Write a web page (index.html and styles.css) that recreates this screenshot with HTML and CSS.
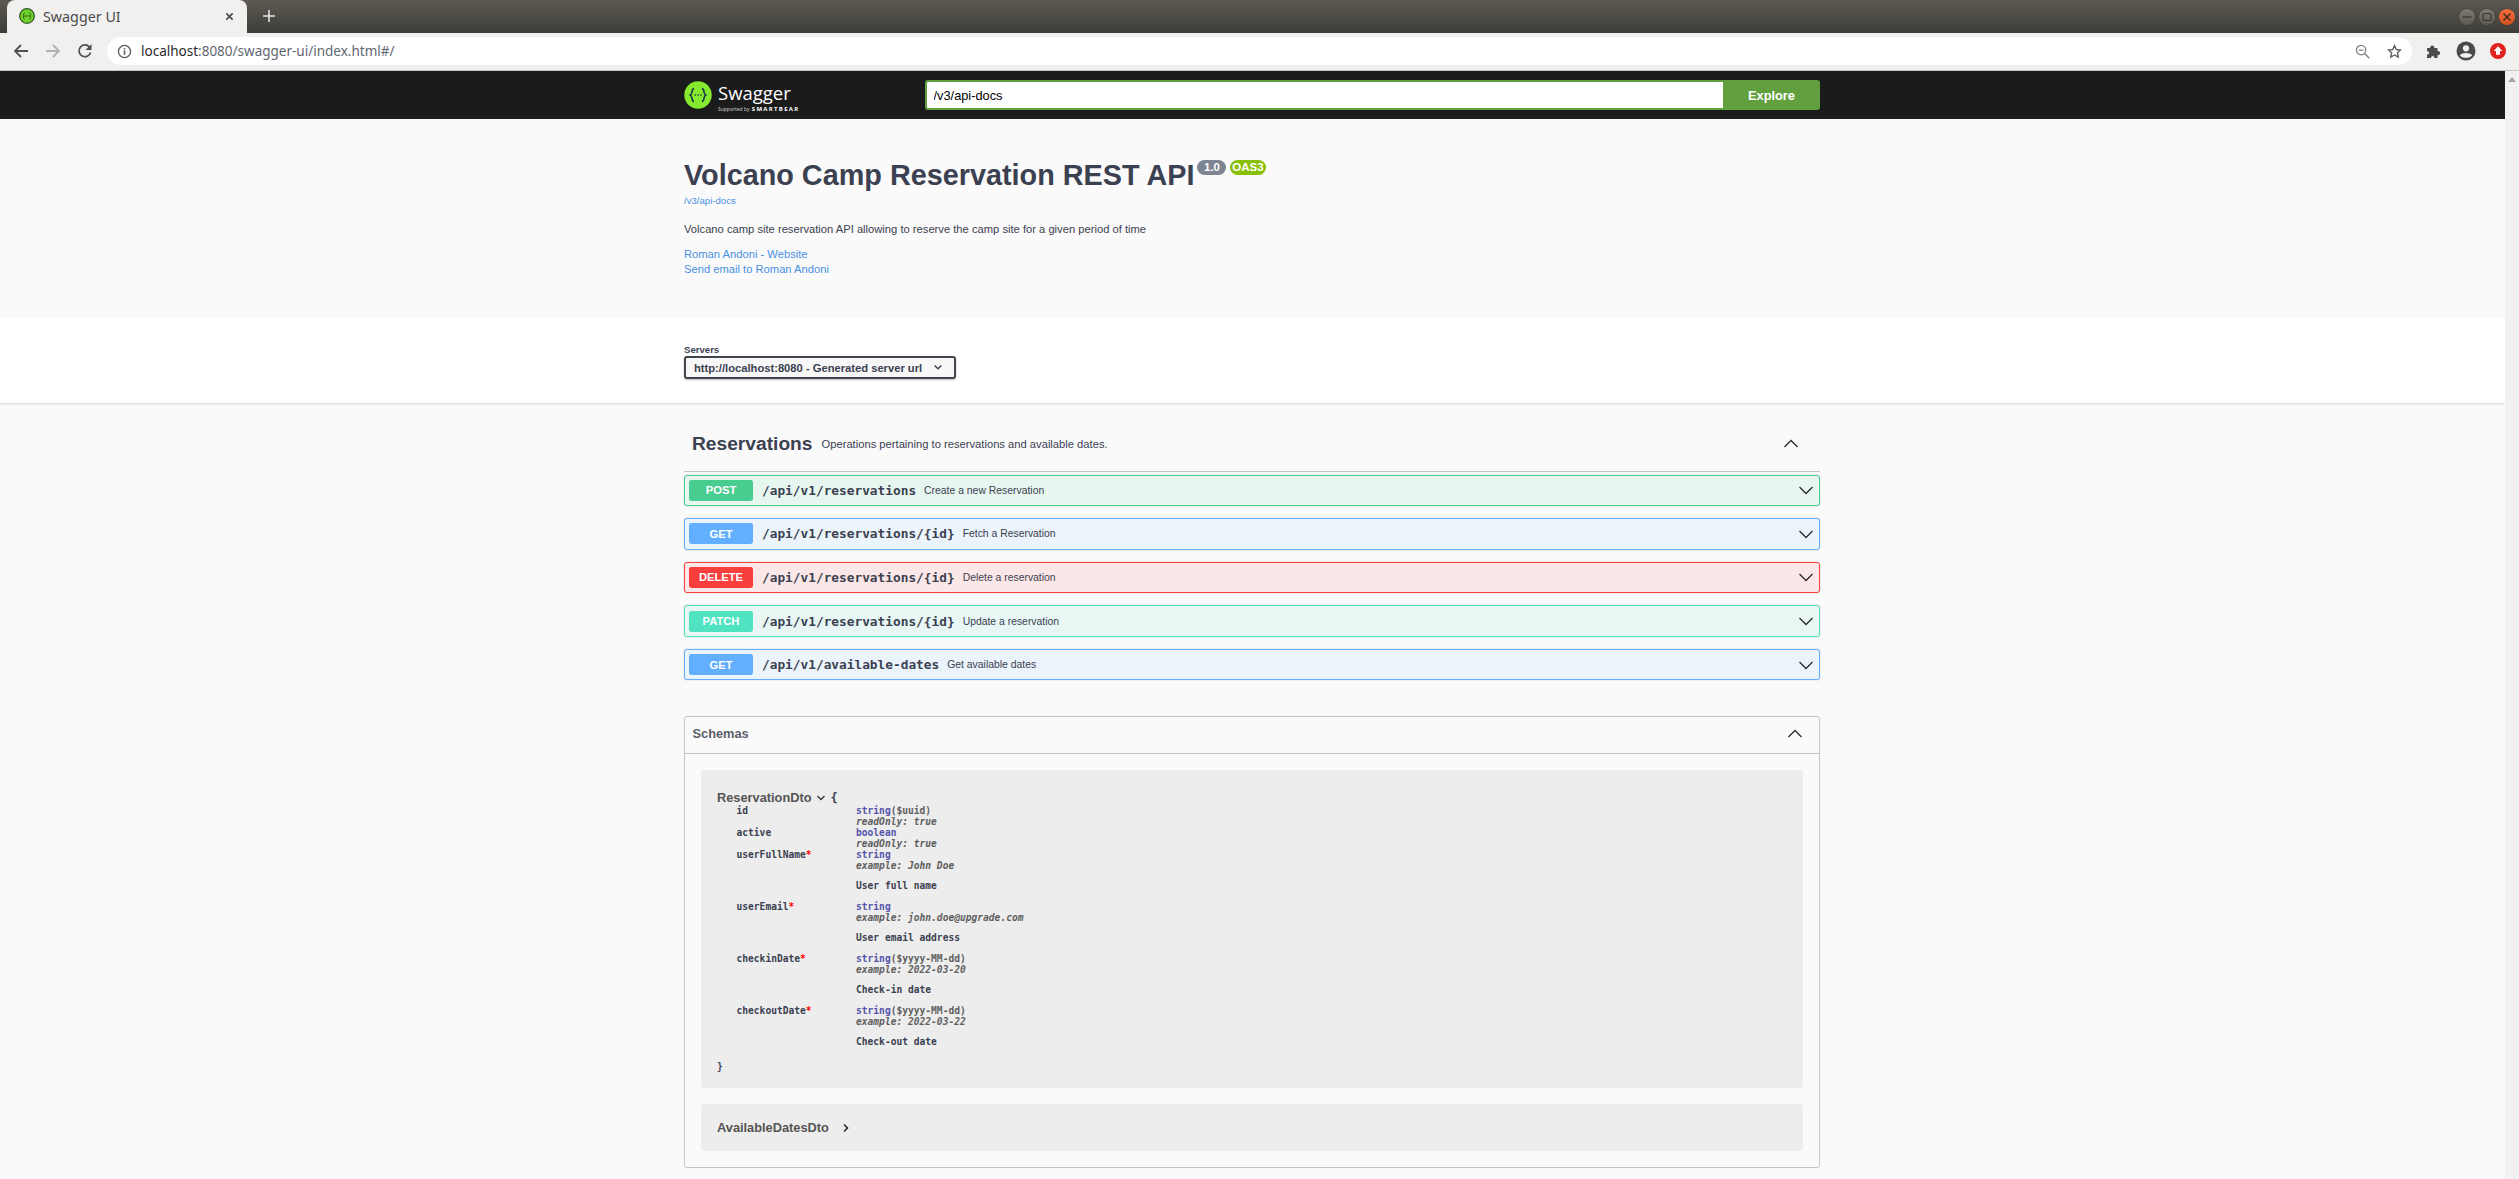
FILE: index.html
```html
<!DOCTYPE html>
<html lang="en">
<head>
<meta charset="utf-8">
<title>Swagger UI</title>
<link rel="stylesheet" href="styles.css">
</head>
<body>
<div class="window">
  <header class="tabstrip">
    <div class="tab">
      <svg class="favicon" viewBox="0 0 16 16"><circle cx="8" cy="8" r="7.300" fill="#6fd32a" stroke="#33572a" stroke-width="1.300"/><path d="M5.400 4.500C4 6.500 4 9.500 5.400 11.500M10.600 4.500c1.400 2 1.400 5 0 7M5 8h6" fill="none" stroke="#2c5a20" stroke-width=".9"/></svg>
      <span class="tab-title">Swagger UI</span>
      <svg class="tab-close" viewBox="0 0 10 10"><path d="M1.500 1.500l7 7M8.500 1.500l-7 7" stroke="#45464a" stroke-width="1.700"/></svg>
    </div>
    <svg class="new-tab" viewBox="0 0 12 12"><path d="M6 0v12M0 6h12" stroke="#e8e8e6" stroke-width="1.500"/></svg>
    <div class="win-controls">
      <span class="win-btn"><svg viewBox="0 0 16 16"><path d="M3.500 8h9" stroke="#38372f" stroke-width="1.300"/></svg></span>
      <span class="win-btn"><svg viewBox="0 0 16 16"><rect x="4" y="4.500" width="8" height="7" rx="1" fill="none" stroke="#38372f" stroke-width="1.200"/></svg></span>
      <span class="win-btn win-close"><svg viewBox="0 0 16 16"><path d="M4.500 4.500l7 7M11.500 4.500l-7 7" stroke="#3c2a20" stroke-width="1.400"/></svg></span>
    </div>
  </header>

  <nav class="toolbar">
    <span class="tool"><svg viewBox="0 0 16 16"><path d="M15 8H2M8 2L2 8l6 6" fill="none" stroke="#4f5052" stroke-width="1.800"/></svg></span>
    <span class="tool"><svg viewBox="0 0 16 16"><path d="M1 8h13M8 2l6 6-6 6" fill="none" stroke="#b1b1b1" stroke-width="1.800"/></svg></span>
    <span class="tool"><svg viewBox="0 0 16 16"><path d="M13.600 9.500A5.900 5.900 0 1 1 12.300 3.800" fill="none" stroke="#4f5052" stroke-width="1.800"/><path d="M14.500 1v6h-6z" fill="#4f5052"/></svg></span>
    <div class="omnibox">
      <svg class="info-icon" viewBox="0 0 16 16"><circle cx="8" cy="8" r="6.500" fill="none" stroke="#5f6060" stroke-width="1.500"/><path d="M8 7v4.500M8 4.300v1.600" stroke="#5f6060" stroke-width="1.700"/></svg>
      <span class="url"><span class="url-host">localhost</span>:8080/swagger-ui/index.html#/</span>
      <svg class="omni-icon" viewBox="0 0 16 16"><circle cx="6.500" cy="6.500" r="5" fill="none" stroke="#808182" stroke-width="1.400"/><path d="M4 6.500h5M10.200 10.200l5 5" stroke="#808182" stroke-width="1.500"/></svg>
      <svg class="omni-icon star" viewBox="0 0 16 16"><path d="M8 1.800l1.900 4.100 4.500.5-3.300 3 .9 4.500L8 11.700l-4 2.200.9-4.500-3.300-3 4.500-.5z" fill="none" stroke="#5f6060" stroke-width="1.500"/></svg>
    </div>
    <span class="tool"><svg viewBox="0 0 16 16"><path d="M1 5h3.200c-.6-3.500 4.700-3.500 4.100 0H11.500v3c3.500-.6 3.500 4.700 0 4.100V15H8.300c.6-2.800-3.700-2.800-3.100 0H1v-3.500c2.800.6 2.800-3.700 0-3.100z" fill="#4a4b4d"/></svg></span>
    <span class="tool"><svg class="account" viewBox="0 0 20 20"><circle cx="10" cy="10" r="9.500" fill="#4a4b4d"/><circle cx="10" cy="7.300" r="3.100" fill="#f1f0ee"/><path d="M3.800 14.200c2.500-3.100 9.900-3.100 12.400 0-2.800 3.500-9.600 3.500-12.400 0z" fill="#f1f0ee"/></svg></span>
    <span class="tool"><svg viewBox="0 0 16 16"><circle cx="8" cy="8" r="8" fill="#e0231f"/><path d="M8 3.200L12.300 8H10v3.800H6V8H3.700z" fill="#fff"/></svg></span>
  </nav>

  <div class="viewport">
    <main class="page">
      <section class="topbar">
        <div class="wrapper topbar-inner">
          <div class="logo">
            <svg class="logo-mark" viewBox="0 0 28 28"><circle cx="14" cy="14" r="13.700" fill="#85ea2d"/><path d="M10 7.500c-3 .3-1 5.200-3.700 6.500 2.700 1.300.7 6.200 3.700 6.500M18 7.500c3 .3 1 5.200 3.700 6.500-2.700 1.300-.7 6.200-3.700 6.500" fill="none" stroke="#173647" stroke-width="1.600"/><path d="M10.500 14h1.300M13.400 14h1.300M16.300 14h1.300" stroke="#173647" stroke-width="1.500"/></svg>
            <div class="logo-text">
              <span class="logo-name">Swagger</span>
              <span class="logo-sub">Supported by <b class="logo-bear">SMARTBEAR</b></span>
            </div>
          </div>
          <form class="download">
            <input class="download-url" type="text" value="/v3/api-docs">
            <span class="explore">Explore</span>
          </form>
        </div>
      </section>

      <section class="info">
        <div class="wrapper">
          <div class="title-row">
            <h1 class="title">Volcano Camp Reservation REST API</h1>
            <span class="badge badge-version">1.0</span>
            <span class="badge badge-oas">OAS3</span>
          </div>
          <a class="link url-link">/v3/api-docs</a>
          <p class="description">Volcano camp site reservation API allowing to reserve the camp site for a given period of time</p>
          <div class="contacts">
            <a class="link contact-link">Roman Andoni - Website</a>
            <a class="link contact-link">Send email to Roman Andoni</a>
          </div>
        </div>
      </section>

      <section class="scheme">
        <div class="wrapper">
          <div class="servers-label">Servers</div>
          <div class="server-select">
            <span>http://localhost:8080 - Generated server url</span>
            <svg class="select-caret" viewBox="0 0 12 8"><path d="M2 1.500l4 4 4-4" fill="none" stroke="#3b4151" stroke-width="1.700"/></svg>
          </div>
        </div>
      </section>

      <section class="wrapper operations">
        <div class="tag-header">
          <h3 class="tag-name">Reservations</h3>
          <span class="tag-desc">Operations pertaining to reservations and available dates.</span>
          <svg class="chev tag-chev" viewBox="0 0 16 16"><path d="M1.500 11L8 4.500l6.500 6.500" fill="none" stroke="#2b2b2b" stroke-width="1.300"/></svg>
        </div>
        <div class="op op-post">
          <span class="method">POST</span><span class="path">/api/v1/reservations</span><span class="op-desc">Create a new Reservation</span>
          <svg class="chev op-chev" viewBox="0 0 16 16"><path d="M1.500 5L8 11.500 14.500 5" fill="none" stroke="#2b2b2b" stroke-width="1.300"/></svg>
        </div>
        <div class="op op-get">
          <span class="method">GET</span><span class="path">/api/v1/reservations/{id}</span><span class="op-desc">Fetch a Reservation</span>
          <svg class="chev op-chev" viewBox="0 0 16 16"><path d="M1.500 5L8 11.500 14.500 5" fill="none" stroke="#2b2b2b" stroke-width="1.300"/></svg>
        </div>
        <div class="op op-delete">
          <span class="method">DELETE</span><span class="path">/api/v1/reservations/{id}</span><span class="op-desc">Delete a reservation</span>
          <svg class="chev op-chev" viewBox="0 0 16 16"><path d="M1.500 5L8 11.500 14.500 5" fill="none" stroke="#2b2b2b" stroke-width="1.300"/></svg>
        </div>
        <div class="op op-patch">
          <span class="method">PATCH</span><span class="path">/api/v1/reservations/{id}</span><span class="op-desc">Update a reservation</span>
          <svg class="chev op-chev" viewBox="0 0 16 16"><path d="M1.500 5L8 11.500 14.500 5" fill="none" stroke="#2b2b2b" stroke-width="1.300"/></svg>
        </div>
        <div class="op op-get">
          <span class="method">GET</span><span class="path">/api/v1/available-dates</span><span class="op-desc">Get available dates</span>
          <svg class="chev op-chev" viewBox="0 0 16 16"><path d="M1.500 5L8 11.500 14.500 5" fill="none" stroke="#2b2b2b" stroke-width="1.300"/></svg>
        </div>
      </section>

      <section class="wrapper">
        <div class="schemas">
          <div class="schemas-header">
            <h4 class="schemas-title">Schemas</h4>
            <svg class="chev schemas-chev" viewBox="0 0 16 16"><path d="M1.500 11L8 4.500l6.500 6.500" fill="none" stroke="#2b2b2b" stroke-width="1.300"/></svg>
          </div>
          <div class="schemas-body">
            <div class="model-box model-open">
              <div class="model-head">
                <span class="model-name">ReservationDto</span>
                <svg class="model-caret" viewBox="0 0 10 8"><path d="M1.500 2l3.500 3.500L8.500 2" fill="none" stroke="#333" stroke-width="1.300"/></svg>
                <span class="brace">{</span>
              </div>
              <div class="prop"><div class="prop-name">id</div><div class="prop-val"><div class="type">string<span class="fmt">($uuid)</span></div><div class="meta">readOnly: true</div></div></div>
              <div class="prop"><div class="prop-name">active</div><div class="prop-val"><div class="type">boolean</div><div class="meta">readOnly: true</div></div></div>
              <div class="prop"><div class="prop-name">userFullName<span class="req">*</span></div><div class="prop-val"><div class="type">string</div><div class="meta">example: John Doe</div><div class="prop-desc">User full name</div></div></div>
              <div class="prop"><div class="prop-name">userEmail<span class="req">*</span></div><div class="prop-val"><div class="type">string</div><div class="meta">example: john.doe@upgrade.com</div><div class="prop-desc">User email address</div></div></div>
              <div class="prop"><div class="prop-name">checkinDate<span class="req">*</span></div><div class="prop-val"><div class="type">string<span class="fmt">($yyyy-MM-dd)</span></div><div class="meta">example: 2022-03-20</div><div class="prop-desc">Check-in date</div></div></div>
              <div class="prop"><div class="prop-name">checkoutDate<span class="req">*</span></div><div class="prop-val"><div class="type">string<span class="fmt">($yyyy-MM-dd)</span></div><div class="meta">example: 2022-03-22</div><div class="prop-desc">Check-out date</div></div></div>
              <div class="brace-close">}</div>
            </div>
            <div class="model-box model-closed">
              <span class="model-name">AvailableDatesDto</span>
              <svg class="model-arrow" viewBox="0 0 8 10"><path d="M2 1.500L5.500 5 2 8.500" fill="none" stroke="#222" stroke-width="1.500"/></svg>
            </div>
          </div>
        </div>
      </section>
    </main>
    <aside class="scrollbar">
      <svg class="scroll-up" viewBox="0 0 8 5"><path d="M0 5L4 0l4 5z" fill="#a3a3a3"/></svg>
    </aside>
  </div>
</div>
</body>
</html>
```

FILE: styles.css
```css
* { box-sizing: border-box; }
html, body { margin: 0; height: 100%; overflow: hidden; }
body { font-family: "Liberation Sans", Arial, sans-serif; color: #3b4151; background: #fafafa; }
h1, h3, h4, p { margin: 0; }

.window { height: 1179px; display: flex; flex-direction: column; }

/* browser chrome */
.tabstrip { height: 33px; flex: none; display: flex; align-items: flex-start; padding-left: 7px; background: linear-gradient(#5c5a52, #3d3c37); }
.tab { width: 240px; height: 33px; display: flex; align-items: center; padding: 0 12px 1px 12px; background: #f1f0ee; border-radius: 8px 8px 0 0; }
.favicon { width: 16px; height: 16px; flex: none; }
.tab-title { margin-left: 8px; flex: 1; font: 14.300px "Noto Sans", "Open Sans", sans-serif; color: #4a4b4d; }
.tab-close { width: 9px; height: 9px; margin-right: 1px; }
.new-tab { width: 12px; height: 12px; margin: 10px 0 0 16px; }
.win-controls { margin-left: auto; padding-right: 4px; height: 33px; display: flex; align-items: center; gap: 4px; }
.win-btn { width: 16px; height: 16px; border-radius: 50%; background: linear-gradient(#7d7b73, #5b5a53); box-shadow: 0 0 0 .5px #38372f; display: block; }
.win-btn svg { display: block; width: 16px; height: 16px; }
.win-close { background: linear-gradient(#f0703c, #d9501f); }

.toolbar { height: 38px; flex: none; display: flex; align-items: center; padding: 0 5px 1px; background: #f1f0ee; border-bottom: 1px solid #c3c3c1; }
.tool { width: 32px; height: 28px; flex: none; display: flex; align-items: center; justify-content: center; }
.tool svg { width: 16px; height: 16px; }
.tool .account { width: 20px; height: 20px; }
.omnibox { flex: 1; height: 28px; margin: 0 6px; display: flex; align-items: center; padding: 0 10px 0 10px; background: #fff; border-radius: 14px; }
.info-icon { width: 15px; height: 15px; flex: none; }
.url { margin-left: 9px; flex: 1; font: 13.500px "Noto Sans", "Open Sans", sans-serif; color: #5f6771; }
.url-host { color: #2a2b2d; }
.omni-icon { width: 15px; height: 15px; flex: none; }
.star { margin-left: 17px; }

.viewport { flex: 1; min-height: 0; display: flex; }
.page { flex: 1; min-width: 0; overflow: hidden; }
.scrollbar { width: 14px; flex: none; background: #f1f1f1; display: flex; justify-content: center; padding-top: 6px; align-items: flex-start; }
.scroll-up { width: 8px; height: 5px; }

.wrapper { width: 1136px; margin-left: 684px; }

/* top bar */
.topbar { height: 48px; background: #1b1b1b; }
.topbar-inner { height: 100%; display: flex; align-items: center; }
.logo { width: 240.500px; display: flex; align-items: center; color: #fff; }
.logo-mark { width: 28px; height: 28px; flex: none; }
.logo-text { margin: 5px 0 0 6px; display: flex; flex-direction: column; }
.logo-name { font: 400 18.500px/20px "Open Sans", sans-serif; color: #fff; }
.logo-sub { margin-top: 2px; font: 5px/8px "Open Sans", sans-serif; color: #d8d8d8; white-space: nowrap; }
.logo-bear { margin-left: 1px; font: 700 6px "Open Sans", sans-serif; letter-spacing: 1.300px; color: #fff; }
.download { flex: 1; height: 30px; display: flex; }
.download-url { flex: 1; min-width: 0; height: 30px; padding: 0 4px 0 7px; border: 2px solid #62a03f; border-right: 0; border-radius: 3px 0 0 3px; background: #fff; font: 12.800px "Liberation Sans", sans-serif; color: #000; outline: 0; }
.explore { width: 97px; height: 30px; display: flex; align-items: center; justify-content: center; background: #62a03f; border-radius: 0 3px 3px 0; color: #fff; font: 700 12.800px "Liberation Sans", sans-serif; }

/* info */
.info { height: 198px; padding-top: 39px; }
.title-row { display: flex; align-items: flex-start; height: 34px; }
.title { font: 700 28.800px/34px "Liberation Sans", sans-serif; color: #3b4151; }
.badge { height: 15px; margin-top: 1.500px; border-radius: 12px; display: flex; align-items: center; justify-content: center; color: #fff; font: 700 11.500px "Liberation Sans", sans-serif; }
.badge-version { width: 29px; margin-left: 3px; background: #7d8492; }
.badge-oas { width: 36px; margin-left: 3.500px; background: #89bf04; }
.link { display: block; color: #4990e2; }
.url-link { margin-top: 3px; font: 9.600px/12px "Liberation Sans", sans-serif; }
.description { margin-top: 15px; font: 11.200px/14px "Liberation Sans", sans-serif; color: #3b4151; }
.contacts { margin-top: 10.500px; }
.contact-link { font: 11.200px/15px "Liberation Sans", sans-serif; }

/* servers */
.scheme { height: 86px; padding-top: 27px; background: #fff; box-shadow: 0 1px 2px 0 rgba(0,0,0,.15); position: relative; }
.servers-label { font: 700 9.600px/12px "Liberation Sans", sans-serif; color: #3b4151; }
.server-select { width: 272px; height: 23px; display: flex; align-items: center; padding: 0 9px 0 8px; border: 2px solid #41444e; border-radius: 3px; background: #f7f7f7; box-shadow: 0 1px 2px rgba(0,0,0,.25); font: 700 11.200px "Liberation Sans", sans-serif; color: #3b4151; }
.select-caret { width: 10px; height: 7px; margin-left: 11px; flex: none; }

/* operations */
.operations { padding-top: 24.500px; }
.tag-header { height: 44px; padding: 0 0 10px 8px; display: flex; align-items: center; border-bottom: 1px solid #c4c5c9; margin-bottom: 3px; }
.tag-name { font: 700 19.200px/34px "Liberation Sans", sans-serif; color: #3b4151; }
.tag-desc { margin-left: 9px; font: 11.200px "Liberation Sans", sans-serif; color: #3b4151; }
.chev { width: 16px; height: 16px; flex: none; margin-left: auto; }
.tag-chev { margin-right: 21px; }
.op { height: 31.600px; margin-bottom: 12px; display: flex; align-items: center; padding: 0 4px; border: 1px solid; border-radius: 3px; box-shadow: 0 0 2px rgba(0,0,0,.19); }
.method { width: 64px; height: 21px; flex: none; display: flex; align-items: center; justify-content: center; border-radius: 2.400px; color: #fff; font: 700 11.200px "Liberation Sans", sans-serif; }
.path { margin-left: 9px; font: 700 12.800px "DejaVu Sans Mono", monospace; color: #3b4151; }
.op-desc { margin-left: 8px; font: 10.400px "Liberation Sans", sans-serif; color: #3b4151; }
.op-chev { margin-right: 1px; }
.op-post { background: #e8f6f0; border-color: #49cc90; }
.op-post .method { background: #49cc90; }
.op-get { background: #ebf3fb; border-color: #61affe; }
.op-get .method { background: #61affe; }
.op-delete { background: #fbe7e7; border-color: #f93e3e; }
.op-delete .method { background: #f93e3e; }
.op-patch { background: #e8f7f4; border-color: #50e3c2; }
.op-patch .method { background: #50e3c2; }

/* schemas */
.schemas { margin-top: 36px; height: 452px; border: 1px solid #c4c5c9; border-radius: 3px; }
.schemas-header { height: 37px; display: flex; align-items: center; padding: 0 7.500px 3px; border-bottom: 1px solid #c4c5c9; }
.schemas-title { font: 700 12.800px "Liberation Sans", sans-serif; color: #5a5f6b; }
.schemas-chev { margin-right: 9px; }
.schemas-body { padding: 16px 16px 0; }
.model-box { background: #ededed; border-radius: 3px; padding-left: 16px; }
.model-open { height: 318px; padding-top: 20px; font: 700 9.600px/11px "DejaVu Sans Mono", monospace; color: #3b4151; }
.model-closed { margin-top: 16px; height: 47px; display: flex; align-items: center; }
.model-head { height: 15px; display: flex; align-items: center; }
.model-name { font: 700 12.800px "Liberation Sans", sans-serif; color: #555; }
.model-caret { width: 10px; height: 8px; margin-left: 4px; }
.brace { margin-left: 5px; font: 700 12px "DejaVu Sans Mono", monospace; }
.prop { display: flex; padding-left: 19.500px; }
.prop-name { width: 119.500px; flex: none; }
.req { color: #f00; }
.type { color: #55a; }
.fmt { color: #606060; }
.meta { color: #606060; font-style: italic; }
.prop-desc { margin: 9px 0 10px; }
.brace-close { margin-top: 3.500px; font-size: 9.600px; }
.model-arrow { width: 8px; height: 10px; margin-left: 13px; }
```
